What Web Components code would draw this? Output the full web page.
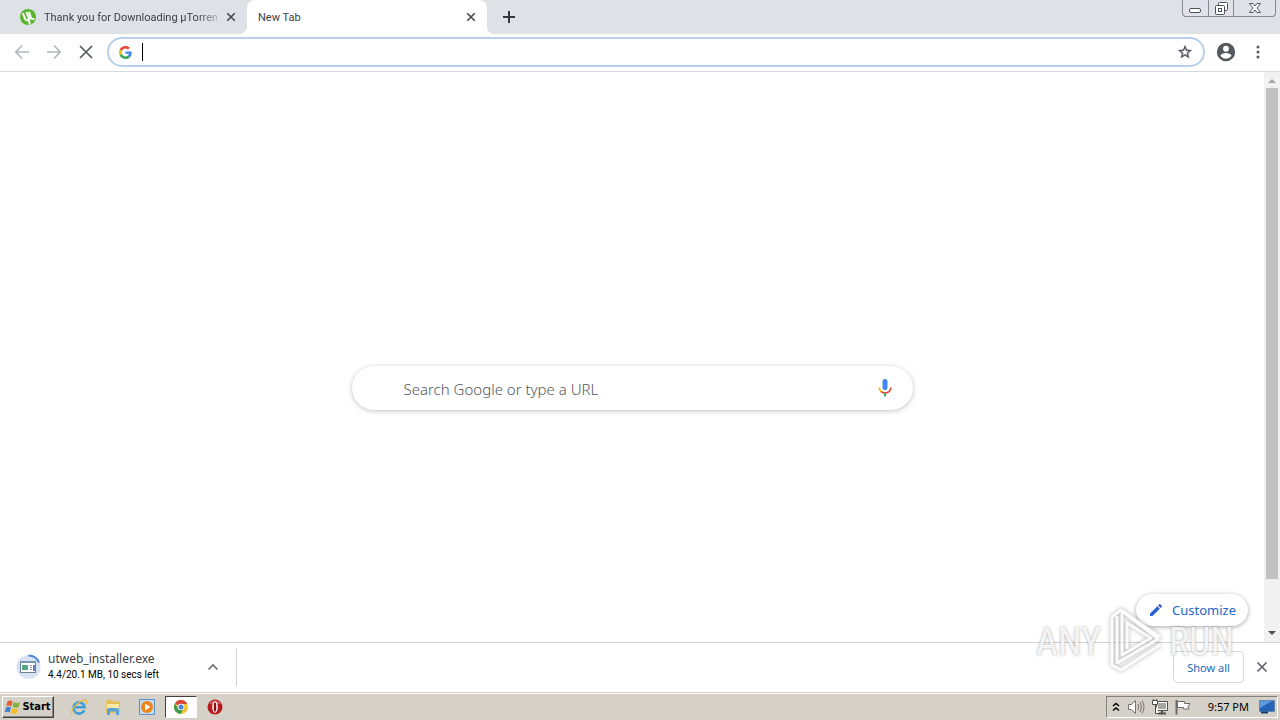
<!DOCTYPE html>
<html lang="en">
<head>
<meta charset="utf-8">
<title>New Tab</title>
<style>
html,body{height:100%;margin:0}
body{font-family:"Noto Sans","Open Sans",sans-serif;font-size:11px;color:#3c4043;background:#fff;overflow:hidden}
</style>
</head>
<body>
<desktop-screen></desktop-screen>
<script>
const BASE = `*{box-sizing:border-box}button{font:inherit;color:inherit;background:none;border:0;padding:0;margin:0;display:flex;align-items:center;justify-content:center}svg{display:block;flex:none}`;
const define = (name, css, html) => customElements.define(name, class extends HTMLElement {
  constructor() {
    super();
    const t = document.createElement('template');
    t.innerHTML = `<style>:host{box-sizing:border-box}${BASE}${css}</style>${html}`;
    this.attachShadow({mode: 'open'}).append(t.content.cloneNode(true));
  }
});

const cross = (size, width, color) => `<svg width="${size}" height="${size}" viewBox="0 0 12 12" stroke="${color}" stroke-width="${width}"><path d="M1.5 1.5l9 9M10.5 1.5l-9 9"/></svg>`;

define('browser-tab', `
:host{display:flex;align-items:center;width:240px;height:34px;padding:0 10px 0 13px;position:relative;font-family:Roboto,"Noto Sans",sans-serif;font-size:11px;line-height:16px;color:#3c4043}
:host([active]){background:#fff;border-radius:8px 8px 0 0;padding-left:11px}
:host([active])::before,:host([active])::after{content:"";position:absolute;bottom:0;width:8px;height:8px}
:host([active])::before{left:-8px;background:radial-gradient(circle at 0 0,transparent 8px,#fff 8px)}
:host([active])::after{right:-8px;background:radial-gradient(circle at 100% 0,transparent 8px,#fff 8px)}
.title{flex:1;min-width:0;padding-top:1px;white-space:nowrap;overflow:hidden;-webkit-mask-image:linear-gradient(to right,#000 88%,rgba(0,0,0,.3));mask-image:linear-gradient(to right,#000 88%,rgba(0,0,0,.3))}
:host([active]) .title{-webkit-mask-image:none;mask-image:none}
::slotted(svg){display:block;margin-right:8px;flex:none}
button{width:12px;height:12px;margin-left:8px}
`, `<slot name="icon"></slot><div class="title"><slot></slot></div><button aria-label="Close tab">${cross(10, 2, '#45484d')}</button>`);

define('window-controls', `
:host{display:flex;height:17px;border:1px solid #858a93;border-top:0;border-radius:0 0 4px 4px;background:#dfe2e8}
button{width:25px;height:16px}
button+button{border-left:1px solid #858a93}
button:first-child{width:24px}
button:last-child{width:42px}
`, `<button aria-label="Minimize"><svg width="13" height="16" viewBox="0 0 13 16"><rect x=".5" y="8.500" width="11" height="4" rx="1.500" fill="#fff" stroke="#4c515b"/></svg></button>
<button aria-label="Restore"><svg width="15" height="16" viewBox="0 0 15 16" fill="#fff" stroke="#4c515b"><rect x="4.500" y="2.500" width="9" height="8" rx="1"/><rect x="1.500" y="5.500" width="9" height="9" rx="1"/><rect x="4.500" y="8.500" width="3" height="3"/></svg></button>
<button aria-label="Close"><svg width="14" height="16" viewBox="0 0 14 16"><path d="M1.500 3.500h3.500l2 2.500 2-2.500h3.500L9 8l3.500 4.500H9L7 10l-2 2.500H1.500L5 8z" fill="#fff" stroke="#565b65"/></svg></button>`);

define('tab-strip', `
:host{display:flex;align-items:flex-start;height:34px;background:#dee1e6;padding:0 4px 0 7px}
.new{width:28px;height:34px;margin-left:8px}
window-controls{margin-left:auto}
`, `<browser-tab><svg slot="icon" width="16" height="16" viewBox="0 0 16 16"><circle cx="8" cy="8" r="8" fill="#58b530"/><path d="M2.800 4.200l2.400 5.800q1.200 2 3.400.6l1.400 5M6.400 3l2.200 5.600q.9 1.400 2.300.3L9 2.800M10.900 8.900q1 1.600 3.600.7" fill="none" stroke="#fff" stroke-width="2"/></svg>Thank you for Downloading µTorrent</browser-tab>
<browser-tab active>New Tab</browser-tab>
<button class="new" aria-label="New tab"><svg width="12" height="12" viewBox="0 0 12 12" stroke="#33363b" stroke-width="2"><path d="M0 6h12M6 0v12"/></svg></button>
<window-controls></window-controls>`);

define('address-bar', `
:host{display:flex;align-items:center;height:30px;border:2px solid #b8d0ec;border-radius:15px;background:#fff;padding:0 10px}
.caret{width:1px;height:18px;background:#000;margin-left:10px}
input{flex:1;min-width:0;border:0;outline:0;padding:0 4px;background:none;font:14px "Noto Sans",sans-serif;height:22px}
`, `<svg width="13" height="13" viewBox="0 0 48 48"><path fill="#EA4335" d="M24 9.500c3.500 0 6.700 1.200 9.200 3.600l6.900-6.900C35.900 2.400 30.500 0 24 0 14.600 0 6.500 5.400 2.600 13.200l8 6.200C12.400 13.700 17.700 9.500 24 9.500z"/><path fill="#4285F4" d="M47 24.600c0-1.600-.2-3.100-.4-4.600H24v9h12.900c-.6 3-2.300 5.500-4.800 7.200l7.700 6C44.400 38 47 31.800 47 24.600z"/><path fill="#FBBC05" d="M10.500 28.600a14.500 14.500 0 010-9.200l-8-6.200a24 24 0 000 21.600z"/><path fill="#34A853" d="M24 48c6.500 0 11.900-2.100 15.900-5.800l-7.700-6c-2.200 1.500-4.900 2.300-8.200 2.300-6.300 0-11.600-4.200-13.500-9.900l-8 6.200C6.500 42.600 14.600 48 24 48z"/></svg>
<span class="caret"></span><input type="text" aria-label="Address and search bar">
<button aria-label="Bookmark this tab"><svg width="16" height="16" viewBox="0 0 24 24" fill="#4f5257" stroke="#4f5257" stroke-width=".6"><path fill-rule="evenodd" d="M22 9.240l-7.190-.62L12 2 9.190 8.630 2 9.240l5.460 4.730L5.820 21 12 17.270 18.180 21l-1.630-7.030zM12 15.400l-3.760 2.270 1-4.280-3.320-2.880 4.380-.38L12 6.100l1.710 4.040 4.380.38-3.320 2.880 1 4.280z"/></svg></button>`);

define('nav-bar', `
:host{display:flex;align-items:center;height:38px;background:#fff;border-bottom:1px solid #d5d8dc;padding:0 10px 1px 6px}
button{width:32px;height:32px}
address-bar{flex:1;margin:0 6px 0 5px}
.menu{width:24px;margin-left:5px}
.profile{width:30px}
`, `<button aria-label="Back"><svg width="16" height="16" viewBox="0 0 16 16" fill="none" stroke="#b4b7bb" stroke-width="1.700"><path d="M15 8H2M8 1.500L1.800 8 8 14.500"/></svg></button>
<button aria-label="Forward"><svg width="16" height="16" viewBox="0 0 16 16" fill="none" stroke="#b4b7bb" stroke-width="1.700"><path d="M1 8h13M8 1.500L14.200 8 8 14.500"/></svg></button>
<button aria-label="Stop loading">${cross(16, 1.3, '#56595e')}</button>
<address-bar></address-bar>
<button class="profile" aria-label="Profile"><svg width="22" height="22" viewBox="0 0 24 24" fill="#54575c"><path d="M12 2a10 10 0 100 20 10 10 0 000-20zm0 3.200a3.200 3.200 0 110 6.400 3.200 3.200 0 010-6.400zm0 14.200a7.200 7.200 0 01-6-3.220c.03-1.990 4-3.080 6-3.080s5.970 1.090 6 3.080a7.200 7.200 0 01-6 3.220z"/></svg></button>
<button class="menu" aria-label="Menu"><svg width="4" height="14" viewBox="0 0 4 14" fill="#54575c"><circle cx="2" cy="2" r="1.500"/><circle cx="2" cy="7" r="1.500"/><circle cx="2" cy="12" r="1.500"/></svg></button>`);

define('search-box', `
:host{display:flex;align-items:center;width:561px;max-width:90%;height:44px;border-radius:22px;background:#fff;box-shadow:0 1px 5px rgba(32,33,36,.28);padding:0 19px 0 52px}
input{flex:1;min-width:0;border:0;outline:0;padding:1px 0 0;background:none;font:300 15px/22px "Noto Sans","Open Sans",sans-serif;color:#5f6368}
input::placeholder{color:#54575c;opacity:1}
`, `<input type="text" aria-label="Search" placeholder="Search Google or type a URL">
<button aria-label="Search by voice"><svg width="18" height="20" viewBox="0 0 18 20" fill="none"><rect x="6.500" y="1" width="5" height="11" rx="2.500" fill="#4285f4"/><path d="M3.200 9.500q.1 2.500 1.900 4" stroke="#fbbc05" stroke-width="1.700"/><path d="M5.100 13.500Q7 15 9 15q5.500-.2 5.800-5.500" stroke="#ea4335" stroke-width="1.700"/><path d="M9 15v3.500" stroke="#34a853" stroke-width="2"/></svg></button>`);

define('page-scrollbar', `
:host{display:flex;flex-direction:column;align-items:center;width:16px;background:#f1f1f1;padding:6px 0}
.thumb{width:12px;flex:1;margin:4px 0 51px;background:#c1c1c1}
`, `<svg width="8" height="6"><path d="M0 5l4-4 4 4z" fill="#a3a3a3"/></svg><div class="thumb"></div><svg width="8" height="6"><path d="M0 1l4 4 4-4z" fill="#505050"/></svg>`);

define('new-tab-page', `
:host{display:flex;min-height:0;background:#fff}
main{flex:1;display:flex;flex-direction:column;align-items:center;padding:294px 16px 16px}
.customize{margin-top:auto;align-self:flex-end;height:32px;padding:0 12px;gap:8px;border-radius:16px;background:#fff;box-shadow:0 1px 4px rgba(32,33,36,.4);font-size:13px;line-height:20px;color:#2468c8}
`, `<main><search-box></search-box><button class="customize"><svg width="16" height="16" viewBox="0 0 24 24" fill="#2a62d4"><path d="M3 17.250V21h3.750L17.810 9.940l-3.750-3.750zM20.710 7.040a1 1 0 000-1.410l-2.340-2.340a1 1 0 00-1.410 0l-1.830 1.830 3.750 3.750z"/></svg>Customize</button></main><page-scrollbar></page-scrollbar>`);

define('download-item', `
:host{display:flex;align-items:center;width:237px;height:38px;padding-left:16px;border-right:1px solid #d0d2d5}
.text{flex:1;margin-left:7px;display:flex;flex-direction:column}
.name{font-size:12px;line-height:16px;color:#3c4043}
.status{font:10px/16px Roboto,"Noto Sans",sans-serif;color:#000}
button{width:22px;height:22px;margin-right:12px}
`, `<svg width="25" height="26" viewBox="0 0 25 26"><circle cx="12.500" cy="13" r="12" fill="#d9e2f2"/><path d="M12.500 1.500A11.500 11.500 0 0 1 23 8.500" fill="none" stroke="#4a86d8" stroke-width="2"/><rect x="4.500" y="7.500" width="15" height="11" fill="#fff" stroke="#698391"/><path d="M4 8h16" stroke="#7798ae" stroke-width="2"/><path d="M6 11h6v5H6z" fill="#59a486"/><path d="M14 11.500h2M14 13.500h2M14 15.500h2" stroke="#999"/><path d="M17 11h2v6h-2z" fill="#6380b5"/></svg>
<div class="text"><span class="name">utweb_installer.exe</span><span class="status">4.4/20.1 MB, 10 secs left</span></div>
<button aria-label="Download options"><svg width="12" height="8" viewBox="0 0 12 8" fill="none" stroke="#6b6e73" stroke-width="1.700"><path d="M1.500 6.500L6 2l4.500 4.500"/></svg></button>`);

define('download-shelf', `
:host{display:flex;align-items:center;height:50px;background:#fff;border-top:1px solid #d0d2d5;padding:0 12px 1px 0}
.show{margin-left:auto;width:71px;height:32px;border:1px solid #d8dadd;border-radius:4px;font-size:11px;color:#2468b8}
.close{width:12px;height:12px;margin-left:12px}
`, `<download-item></download-item><button class="show">Show all</button><button class="close" aria-label="Close downloads bar">${cross(12, 1.7, '#606368')}</button>`);

define('start-button', `
:host{display:block}
button{width:52px;height:22px;gap:1px;background:#d6d1c8;border:1px solid;border-color:#fff #404040 #404040 #fff;box-shadow:inset -1px -1px #88857e;font:bold 11px/16px "DejaVu Sans Condensed","Open Sans",sans-serif;color:#000}
`, `<button><svg width="16" height="16" viewBox="0 0 16 16"><path d="M2.500 2.500q3-2 5 0L6.200 7.500q-2.700-1.800-5 0z" fill="#e2602c"/><path d="M8.500 3q3 1.800 6.500.2l-1.500 5q-3 1.500-6-.4z" fill="#7fb43c"/><path d="M1 8.500q2.500-1.500 5 0l-1.400 5q-2.300-1.600-5 0z" fill="#3f7fd0"/><path d="M7 9q3 1.800 6.200.2l-1.400 5q-3 1.600-6.200-.4z" fill="#f4bd2c"/></svg>Start</button>`);

define('quick-launch', `
:host{display:flex;align-items:center;gap:2px}
button{width:32px;height:22px}
.on{background:#fff;border:1px solid;border-color:#404040 #fff #fff #404040}
`, `<button aria-label="Internet Explorer"><svg width="18" height="18" viewBox="0 0 18 18" fill="none"><path d="M14.300 12.200a5.600 5.600 0 1 1 .4-3H5" stroke="#3f9fdc" stroke-width="2.600"/><path d="M2.500 16.500C-1 13 9 2 15 2c2.500 0 2 2.500 1.200 4" stroke="#e9ba42" stroke-width="1.300"/></svg></button>
<button aria-label="File Explorer"><svg width="18" height="18" viewBox="0 0 18 18"><path d="M2 2.500l6-1 1 2h7V15H2z" fill="#e4bf55"/><path d="M3 6h12v7H3z" fill="#f8eaa7"/><path d="M3 17v-5q0-2 2-2h8q2 0 2 2v5h-3v-3.500H6V17z" fill="#5aa3d8"/></svg></button>
<button aria-label="Media Player"><svg width="16" height="16" viewBox="0 0 16 16"><path d="M.5.500h15v15H.5z" fill="#c2dcf4" stroke="#5b91c5"/><circle cx="8" cy="8" r="6" fill="#ef8315"/><path d="M6 4.500L11.500 8 6 11.500z" fill="#fff"/></svg></button>
<button class="on" aria-label="Chrome"><svg width="14" height="14" viewBox="0 0 14 14"><circle cx="7" cy="7" r="7" fill="#f3c62f"/><path d="M7 7L1 3.400A7 7 0 0 1 13.200 4H7z" fill="#d94537"/><path d="M1 3.400A7 7 0 0 0 6.500 14L9.800 8.500 4 8.500z" fill="#399b4b"/><circle cx="7" cy="7" r="3.300" fill="#fff"/><circle cx="7" cy="7" r="2.500" fill="#4683df"/></svg></button>
<button aria-label="Opera"><svg width="16" height="16" viewBox="0 0 16 16"><circle cx="8" cy="8" r="7.500" fill="#b61920"/><path d="M2 5a7 7 0 0 1 12 0z" fill="#d65a5c"/><ellipse cx="8" cy="8" rx="2.800" ry="5.800" fill="#fff"/><ellipse cx="8" cy="8" rx="1.300" ry="4.800" fill="#8d1015"/></svg></button>`);

define('system-tray', `
:host{display:flex;align-items:center;width:172px;height:22px;padding:0 2px 0 5px;border:1px solid;border-color:#85827b #fff #fff #85827b}
button{flex:none}
.gap{margin-left:7px}
time{margin-left:auto;font:11px/16px "Noto Sans",sans-serif;color:#000;white-space:nowrap}
.desk{margin-left:10px}
`, `<button aria-label="Show hidden icons"><svg width="8" height="11" viewBox="0 0 8 11" fill="none" stroke="#000" stroke-width="1.500"><path d="M1 4l3-2.500L7 4M1 8.500L4 6l3 2.500"/></svg></button>
<button class="gap" aria-label="Volume"><svg width="18" height="16" viewBox="0 0 18 16" fill="none" stroke="#74736f"><path d="M1.500 5.500h3l4-4v13l-4-4h-3z" fill="#fff"/><path d="M11 5q1.500 3 0 6M13 3q3 5 0 10M15 1.500q4 6.500 0 13"/></svg></button>
<button class="gap" aria-label="Network"><svg width="16" height="16" viewBox="0 0 16 16"><path d="M4.500 2.500h11v9h-11z" fill="#a5a49d" stroke="#504f4b"/><path d="M5.500 3.500h9v7h-9z" fill="none" stroke="#fff"/><path d="M6 14.500h8M10 12v2" stroke="#504f4b" stroke-width="2"/><path d="M.5 1.500h5v4h-5zM3.500 6v8.500H7M1.500 0v1M4.500 0v1" fill="#fff" stroke="#504f4b"/></svg></button>
<button class="gap" aria-label="Action Center"><svg width="16" height="16" viewBox="0 0 16 16"><path d="M2.500 2.500h7v2h5.500l-2 3 1 2.500H8.500V8.500h-6z" fill="#fff" stroke="#6d6b65"/><path d="M1.500 1v14.500" stroke="#6d6b65" stroke-width="2"/></svg></button>
<time>9:57 PM</time>
<button class="desk" aria-label="Show desktop"><svg width="16" height="14" viewBox="0 0 16 14"><path d="M.5.500h15v11H.5z" fill="#2563b7" stroke="#6886ad"/><path d="M1 1h12L1 8z" fill="#5c9bdf"/><path d="M2 12.500h7" stroke="#173b74" stroke-width="2"/></svg></button>`);

define('task-bar', `
:host{display:flex;align-items:center;height:28px;background:#d6d1c8;border-top:1px solid #d6d1c8;box-shadow:inset 0 1px #fff;padding:2px 2px 1px}
quick-launch{margin-left:9px}
system-tray{margin-left:auto}
`, `<start-button></start-button><quick-launch></quick-launch><system-tray></system-tray>`);

define('recording-watermark', `
:host{display:flex;align-items:center;gap:6px;position:absolute;right:46px;bottom:46px;height:68px;pointer-events:none;font:38px/44px "Roboto Condensed","Liberation Sans Narrow","Liberation Sans",sans-serif;color:rgba(255,255,255,.85);text-shadow:0 0 3px rgba(0,0,0,.35)}
span{padding-top:4px}
svg{filter:drop-shadow(0 0 2px rgba(0,0,0,.35))}
`, `<span>ANY</span><svg width="56" height="66" viewBox="0 0 56 66" fill="none" stroke="#fff" stroke-opacity=".9" stroke-width="3" stroke-linejoin="round"><path d="M10 9v47l41-24L15 4v44l29-17-24-15v26"/><path d="M5 10v48l9 5 39-25M5 10l9-7 39 27"/></svg><span>RUN</span>`);

define('desktop-screen', `
:host{display:flex;flex-direction:column;min-height:100vh;position:relative}
new-tab-page{flex:1}
`, `<tab-strip></tab-strip><nav-bar></nav-bar><new-tab-page></new-tab-page><download-shelf></download-shelf><task-bar></task-bar><recording-watermark></recording-watermark>`);
</script>
</body>
</html>
